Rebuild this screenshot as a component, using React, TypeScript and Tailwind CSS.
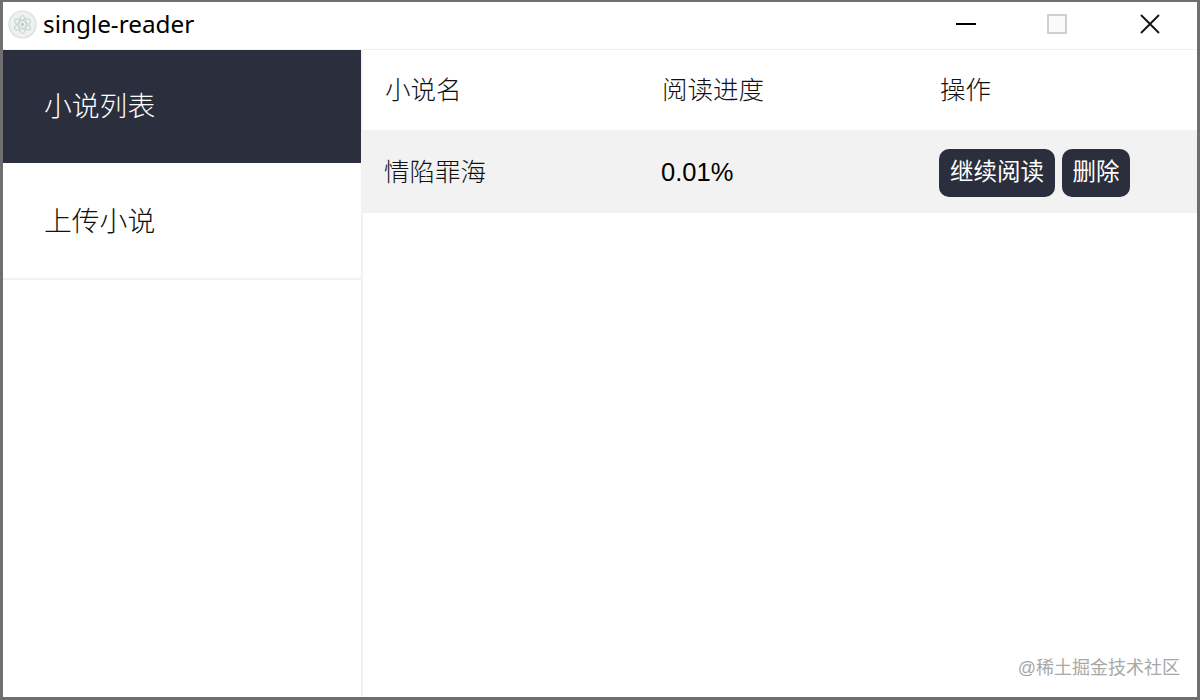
import React from "react";

const cjk = "font-['Liberation_Sans','Noto_Sans_CJK_SC',sans-serif]";

function ElectronIcon() {
  return (
    <svg width="29" height="29" viewBox="0 0 29 29" fill="none" className="shrink-0">
      <circle cx="14.5" cy="14.5" r="13.5" fill="#eef1ef" stroke="#d9dcda" strokeWidth="1.2" />
      <g stroke="#bcd4cc" strokeWidth="1" fill="none">
        <ellipse cx="14.5" cy="14.5" rx="9" ry="3.6" transform="rotate(30 14.5 14.5)" />
        <ellipse cx="14.5" cy="14.5" rx="9" ry="3.6" transform="rotate(90 14.5 14.5)" />
        <ellipse cx="14.5" cy="14.5" rx="9" ry="3.6" transform="rotate(150 14.5 14.5)" />
      </g>
      <circle cx="14.5" cy="14.5" r="1.4" fill="#a9c6bc" />
    </svg>
  );
}

export default function App() {
  return (
    <div className={`w-[1200px] h-[700px] bg-white flex flex-col overflow-hidden border-l-[3px] border-r-[3px] border-t-2 border-b-[3px] border-[#6f6f6f] ${cjk}`}>
      <div className="h-[48px] shrink-0 flex items-center border-b border-[#f1f1f1] pl-[5px] pb-[3px]">
        <ElectronIcon />
        <span className="ml-[6px] text-[24.3px] text-black leading-none font-['Noto_Sans',sans-serif]">single-reader</span>
        <div className="ml-auto flex items-center">
          <svg width="20" height="20" viewBox="0 0 20 20" className="mr-[71px]">
            <path d="M0 10H20" stroke="#000" strokeWidth="2" />
          </svg>
          <svg width="20" height="20" viewBox="0 0 20 20" className="mr-[73px]">
            <rect x="1" y="1" width="18" height="18" fill="#fafafa" stroke="#cfcfcf" strokeWidth="2" />
          </svg>
          <svg width="20" height="20" viewBox="0 0 20 20" className="mr-[37px]">
            <path d="M1 1L19 19M19 1L1 19" stroke="#111" strokeWidth="1.8" />
          </svg>
        </div>
      </div>
      <div className="flex-1 flex min-h-0">
        <nav className="w-[360px] shrink-0 border-r-2 border-[#f2f2f2] flex flex-col">
          <div className="h-[113px] bg-[#2b2e3c] text-white text-[27.8px] font-light flex items-center pl-[41px] pt-[1px]">小说列表</div>
          <div className="h-[117px] border-b-2 border-[#f2f2f2] text-[#111] text-[27.8px] font-light flex items-center pl-[41px] pt-[3px]">上传小说</div>
        </nav>
        <main className="flex-1 flex flex-col min-w-0">
          <div className="h-[80px] flex items-center text-[25.5px] font-light text-[#111] pl-[22px]">
            <div className="w-[277px]">小说名</div>
            <div className="w-[278px]">阅读进度</div>
            <div>操作</div>
          </div>
          <div className="h-[83px] bg-[#f2f2f2] flex items-center text-[25.5px] text-[#111] pl-[21px] pt-[2px]">
            <div className="w-[277px] font-light">情陷罪海</div>
            <div className="w-[278px] text-black">0.01%</div>
            <div className="flex gap-[7px]">
              <button className="h-[48px] w-[116px] rounded-[10px] bg-[#2b2e3c] text-white text-[23.5px]">继续阅读</button>
              <button className="h-[48px] w-[68px] rounded-[10px] bg-[#2b2e3c] text-white text-[23.5px]">删除</button>
            </div>
          </div>
          <div className="flex-1 flex items-end justify-end pr-[17px] pb-[20px]">
            <span className="text-[18px] leading-none text-[#a8a8a8]">@稀土掘金技术社区</span>
          </div>
        </main>
      </div>
    </div>
  );
}
